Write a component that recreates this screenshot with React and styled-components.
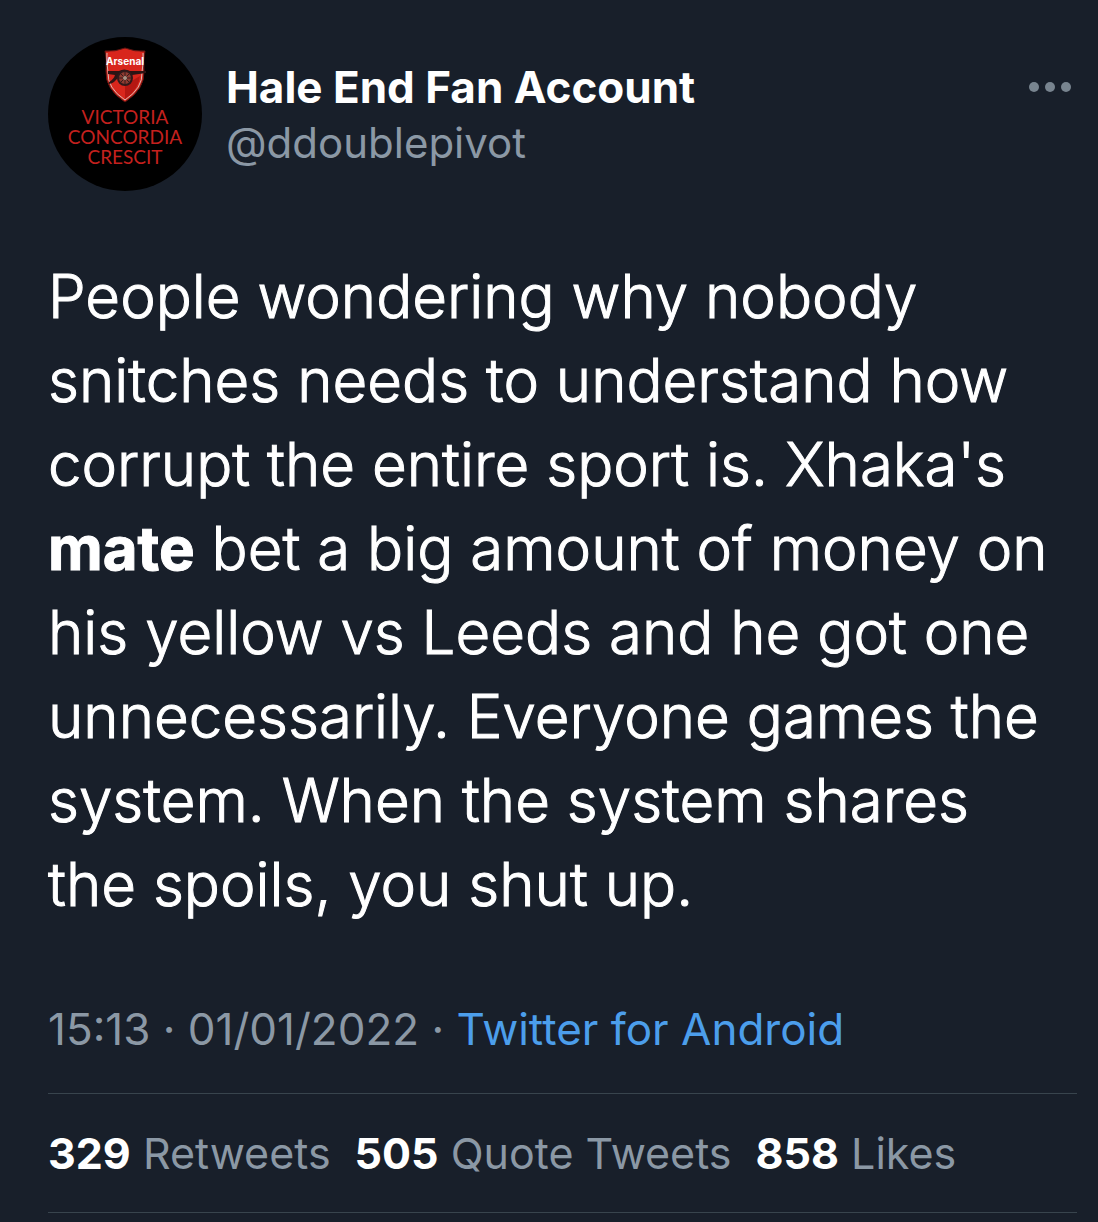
import React from 'react';
import styled, {createGlobalStyle} from 'styled-components';

const stats = [
	{count: 329, label: 'Retweets'},
	{count: 505, label: 'Quote Tweets'},
	{count: 858, label: 'Likes'},
];

const Crest = () => (
	<CrestSvg viewBox="0 0 44 56" aria-hidden="true">
		<path d="M2 4Q12 5 22 1Q32 5 42 4Q40 13 41 24Q42 42 22 55Q2 42 3 24Q4 13 2 4Z" fill="#d8261c" stroke="#5e1512" strokeWidth="1"/>
		<path d="M4 6Q3 14 5 25Q4 41 22 53Q40 41 39 25Q41 14 40 6" fill="none" stroke="#d9b9b2" strokeWidth="1"/>
		<path d="M22 38V52Q36 42 37 29Z" fill="#b51712"/>
		<path d="M5 24H16Q21 21 27 24L43 24V26L29 28L16 29Q12 36 6 37V35Q11 32 12 28L5 27Z" fill="#2c1414"/>
		<circle cx="22" cy="31" r="7" fill="#8e3a30" stroke="#30191a" strokeWidth="2"/>
		<path d="M22 24V38M15 31H29M17 26L27 36M27 26L17 36" stroke="#331d1c" strokeWidth="1"/>
		<circle cx="22" cy="31" r="2" fill="#a99385"/>
		<text x="22" y="18" textAnchor="middle" fontSize="10" fontWeight="700" fill="#fff">Arsenal</text>
	</CrestSvg>
);

const App = () => {
	return (
		<>
			<GlobalStyle/>
			<Tweet>
				<Header>
					<Avatar>
						<Crest/>
						<Motto>VICTORIA<br/>CONCORDIA<br/>CRESCIT</Motto>
					</Avatar>
					<Author>
						<Name>Hale End Fan Account</Name>
						<Handle href="#profile">@ddoublepivot</Handle>
					</Author>
					<MoreButton aria-label="More">
						<svg width="42" height="10" viewBox="0 0 42 10" fill="currentColor">
							<circle cx="5" cy="5" r="5"/>
							<circle cx="21" cy="5" r="5"/>
							<circle cx="37" cy="5" r="5"/>
						</svg>
					</MoreButton>
				</Header>
				<Body>
					People wondering why nobody snitches needs to understand how corrupt the entire sport
					is. Xhaka's <strong>mate</strong> bet a big amount of money on his yellow vs Leeds and
					he got one unnecessarily. Everyone games the system. When the system shares the spoils,
					you shut up.
				</Body>
				<Meta>
					15:13 · 01/01/2022 · <Source href="#source">Twitter for Android</Source>
				</Meta>
				<Stats>
					{stats.map(({count, label}) => (
						<Stat key={label} href="#stats">
							<strong>{count}</strong> {label}
						</Stat>
					))}
				</Stats>
			</Tweet>
		</>
	);
};

export default App;

const GlobalStyle = createGlobalStyle`
	body {
		margin: 0;
		background: #181f2a;
		font-family: Inter, "Liberation Sans", sans-serif;
	}
`;

const Tweet = styled.article`
	padding: 37px 21px 0 48px;
	color: #fff;
`;

const Header = styled.header`
	display: flex;
	align-items: flex-start;
`;

const Avatar = styled.div`
	flex: none;
	width: 154px;
	height: 154px;
	border-radius: 50%;
	background: #000;
	display: flex;
	flex-direction: column;
	align-items: center;
	box-sizing: border-box;
	padding-top: 10px;
`;

const CrestSvg = styled.svg`
	width: 44px;
	height: 56px;
`;

const Motto = styled.div`
	margin-top: 4px;
	font-family: Lato, sans-serif;
	font-size: 19px;
	line-height: 20px;
	text-align: center;
	color: #c4201e;
`;

const Author = styled.div`
	flex: 1;
	min-width: 0;
	margin-left: 24px;
	padding-top: 23px;
	display: flex;
	flex-direction: column;
	align-items: flex-start;
	line-height: 55px;
`;

const Name = styled.span`
	font-size: 44px;
	font-weight: 700;
`;

const Handle = styled.a`
	font-size: 42px;
	color: #8b98a5;
	text-decoration: none;
`;

const MoreButton = styled.button`
	display: flex;
	margin-top: 45px;
	margin-right: 6px;
	padding: 0;
	border: 0;
	background: none;
	color: #78848f;
	cursor: pointer;
`;

const Body = styled.p`
	margin: 63px 0 0;
	padding-right: 20px;
	font-size: 60px;
	font-weight: 300;
	line-height: 84px;
	-webkit-text-stroke: 1px currentColor;

	strong {
		font-weight: 700;
	}
`;

const Meta = styled.div`
	padding: 73px 0 34px;
	font-size: 44px;
	line-height: 60px;
	color: #8b98a5;
`;

const Source = styled.a`
	color: #4c9eeb;
	text-decoration: none;
`;

const Stats = styled.div`
	display: flex;
	flex-wrap: wrap;
	gap: 0 24px;
	padding: 29px 0;
	border: solid #38444d;
	border-width: 1px 0;
`;

const Stat = styled.a`
	font-size: 43px;
	line-height: 60px;
	color: #8b98a5;
	text-decoration: none;

	strong {
		font-weight: 700;
		color: #fff;
	}
`;
